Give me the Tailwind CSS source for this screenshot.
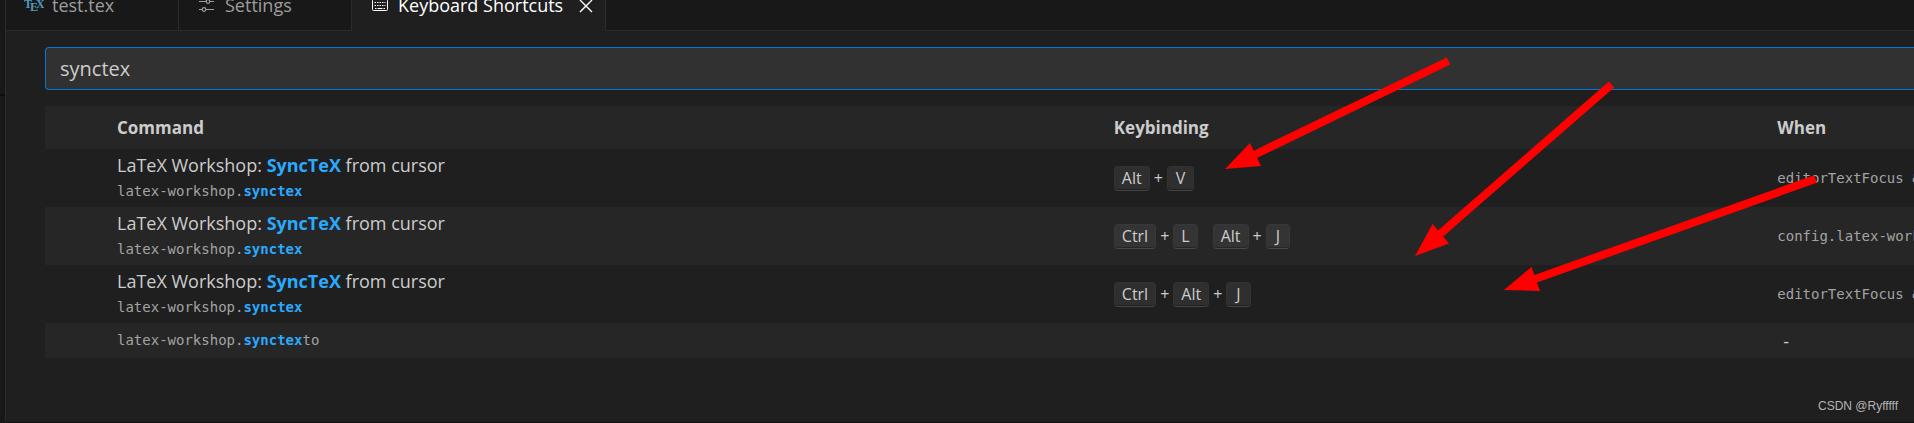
<!DOCTYPE html>
<html lang="en">
<head>
    <meta charset="UTF-8">
    <meta name="viewport" content="width=device-width, initial-scale=1.0">
    <title>Keyboard Shortcuts</title>
    <script src="https://cdn.jsdelivr.net/npm/@tailwindcss/browser@4"></script>
</head>
<body class="bg-[#181818] font-['Open_Sans','Noto_Sans',sans-serif] text-[#cccccc]">
    <div class="relative flex h-screen overflow-hidden border-b border-[#141414]">
        <!-- Edge of the side bar -->
        <div class="flex w-[5px] shrink-0 flex-col">
            <div class="h-24 border-b-2 border-black/40"></div>
        </div>

        <main class="min-w-0 flex-1 border-l border-[#2b2b2b] bg-[#1f1f1f]">
            <!-- Editor tabs -->
            <nav class="-mt-[18px] flex h-[49px] bg-[#181818] text-[18px] text-[#9d9d9d]">
                <a href="#" class="flex w-[173px] items-center border-r border-b border-[#2b2b2b] pb-0.5 pl-[18px]">
                    <svg class="mr-2 h-4 w-5 shrink-0" viewBox="0 0 20 16" fill="#519aba" font-family="Liberation Serif, serif" font-weight="bold" font-size="12">
                        <text x="0" y="11">T</text>
                        <text x="6" y="14">E</text>
                        <text x="12" y="11">X</text>
                    </svg>
                    test.tex
                </a>
                <a href="#" class="flex w-[173px] items-center border-r border-b border-[#2b2b2b] pb-0.5 pl-5">
                    <svg class="mr-2.5 size-4 shrink-0" viewBox="0 0 16 16" fill="none" stroke="#9d9d9d" stroke-width="1.2">
                        <path d="M0 4.500h7.200M10.800 4.500h4.200M0 12.500h3.200M6.800 12.500h8.200" />
                        <circle cx="9" cy="4.500" r="1.800" />
                        <circle cx="5" cy="12.500" r="1.800" />
                    </svg>
                    Settings
                </a>
                <a href="#" class="flex w-[254px] items-center border-r border-[#2b2b2b] bg-[#1f1f1f] pb-0.5 pl-5 whitespace-nowrap text-white">
                    <svg class="mr-2.5 size-4 shrink-0" viewBox="0 0 16 16" fill="none" stroke="#ffffff">
                        <rect x="0.5" y="1.5" width="15" height="11" rx="1" />
                        <path d="M2.500 4.500h11M2.500 7.500h11" stroke-dasharray="1.500 1" />
                        <path d="M3 10.500h1.500M5.500 10.500h5M11.500 10.500h1.500" />
                    </svg>
                    Keyboard Shortcuts
                    <svg class="mr-3 ml-auto size-3.5 shrink-0" viewBox="0 0 14 14" fill="none" stroke="#ffffff" stroke-width="1.400">
                        <path d="M1 1l12 12M13 1l-12 12" />
                    </svg>
                </a>
                <div class="flex-1 border-b border-[#2b2b2b]"></div>
            </nav>

            <div class="pt-4 pl-[39px]">
                <input type="text" value="synctex" aria-label="Search keybindings" class="block h-[43px] w-full rounded-l-sm border border-r-0 border-[#0078d4] bg-[#313131] px-3.5 text-[20px] outline-none">

                <table class="mt-4 w-full table-fixed text-left">
                    <thead>
                        <tr class="h-[43px] bg-[#262626] text-[17px]">
                            <th class="w-[72px]"></th>
                            <th class="w-8/15 font-bold">Command</th>
                            <th class="w-[35.5%] font-bold">Keybinding</th>
                            <th class="font-bold">When</th>
                        </tr>
                    </thead>
                    <tbody class="font-['DejaVu_Sans_Mono',monospace] text-[14px] text-[#a3a3a3]">
                        <tr class="h-[58px]">
                            <td></td>
                            <td>
                                <div class="font-['Open_Sans','Noto_Sans',sans-serif] text-[18px] leading-[26px] text-[#cccccc]">LaTeX Workshop: <b class="text-[#2aaaff]">SyncTeX</b> from cursor</div>
                                <div class="leading-[26px]">latex-workshop.<b class="text-[#2aaaff]">synctex</b></div>
                            </td>
                            <td>
                                <div class="flex items-center gap-1 font-['Open_Sans','Noto_Sans',sans-serif] text-[16px] text-[#cccccc]">
                                    <kbd class="rounded border border-[#333333] border-b-[#444444] bg-[#2f2f2f] px-[7px] font-[inherit] leading-[23px] shadow-[inset_0_-1px_0_#202020]">Alt</kbd>+<kbd class="rounded border border-[#333333] border-b-[#444444] bg-[#2f2f2f] px-2 font-[inherit] leading-[23px] shadow-[inset_0_-1px_0_#202020]">V</kbd>
                                </div>
                            </td>
                            <td class="overflow-hidden whitespace-nowrap">editorTextFocus &amp;&amp;</td>
                        </tr>
                        <tr class="h-[58px] bg-[#262626]">
                            <td></td>
                            <td>
                                <div class="font-['Open_Sans','Noto_Sans',sans-serif] text-[18px] leading-[26px] text-[#cccccc]">LaTeX Workshop: <b class="text-[#2aaaff]">SyncTeX</b> from cursor</div>
                                <div class="leading-[26px]">latex-workshop.<b class="text-[#2aaaff]">synctex</b></div>
                            </td>
                            <td>
                                <div class="flex items-center gap-[15px] font-['Open_Sans','Noto_Sans',sans-serif] text-[16px] text-[#cccccc]">
                                    <span class="flex items-center gap-1">
                                        <kbd class="rounded border border-[#383838] border-b-[#484848] bg-[#343434] px-[7px] font-[inherit] leading-[23px] shadow-[inset_0_-1px_0_#262626]">Ctrl</kbd>+<kbd class="rounded border border-[#383838] border-b-[#484848] bg-[#343434] px-[7px] font-[inherit] leading-[23px] shadow-[inset_0_-1px_0_#262626]">L</kbd>
                                    </span>
                                    <span class="flex items-center gap-1">
                                        <kbd class="rounded border border-[#383838] border-b-[#484848] bg-[#343434] px-[7px] font-[inherit] leading-[23px] shadow-[inset_0_-1px_0_#262626]">Alt</kbd>+<kbd class="rounded border border-[#383838] border-b-[#484848] bg-[#343434] px-[9px] font-[inherit] leading-[23px] shadow-[inset_0_-1px_0_#262626]">J</kbd>
                                    </span>
                                </div>
                            </td>
                            <td class="overflow-hidden whitespace-nowrap">config.latex-workshop</td>
                        </tr>
                        <tr class="h-[58px]">
                            <td></td>
                            <td>
                                <div class="font-['Open_Sans','Noto_Sans',sans-serif] text-[18px] leading-[26px] text-[#cccccc]">LaTeX Workshop: <b class="text-[#2aaaff]">SyncTeX</b> from cursor</div>
                                <div class="leading-[26px]">latex-workshop.<b class="text-[#2aaaff]">synctex</b></div>
                            </td>
                            <td>
                                <div class="flex items-center gap-1 font-['Open_Sans','Noto_Sans',sans-serif] text-[16px] text-[#cccccc]">
                                    <kbd class="rounded border border-[#333333] border-b-[#444444] bg-[#2f2f2f] px-[7px] font-[inherit] leading-[23px] shadow-[inset_0_-1px_0_#202020]">Ctrl</kbd>+<kbd class="rounded border border-[#333333] border-b-[#444444] bg-[#2f2f2f] px-[7px] font-[inherit] leading-[23px] shadow-[inset_0_-1px_0_#202020]">Alt</kbd>+<kbd class="rounded border border-[#333333] border-b-[#444444] bg-[#2f2f2f] px-[9px] font-[inherit] leading-[23px] shadow-[inset_0_-1px_0_#202020]">J</kbd>
                                </div>
                            </td>
                            <td class="overflow-hidden whitespace-nowrap">editorTextFocus &amp;&amp;</td>
                        </tr>
                        <tr class="h-[35px] bg-[#262626]">
                            <td></td>
                            <td>latex-workshop.<b class="text-[#2aaaff]">synctex</b>to</td>
                            <td></td>
                            <td class="pl-1.5 font-['Open_Sans','Noto_Sans',sans-serif] text-[18px] leading-6 text-[#cccccc]">-</td>
                        </tr>
                    </tbody>
                </table>
            </div>
        </main>

        <!-- Annotation arrows -->
        <svg class="pointer-events-none absolute top-0 left-0" width="1914" height="423" viewBox="0 0 1914 423" fill="#ff0000" stroke="#ff0000" aria-hidden="true">
            <g stroke-width="8">
                <path d="M1448.500 61L1255 154.500" />
                <path d="M1611.500 84.500L1440 234" />
                <path d="M1815.500 179L1535 279" />
            </g>
            <g stroke="none">
                <path d="M1225 169L1250 143L1261 166Z" />
                <path d="M1415 256L1432.500 224L1449 243.500Z" />
                <path d="M1504 290L1531.500 267L1540 291Z" />
            </g>
        </svg>

        <p class="absolute right-4 bottom-2 font-['Liberation_Sans',sans-serif] text-[12px] leading-4 text-[#b4b4b4]">CSDN @Ryfffff</p>
    </div>
</body>
</html>
